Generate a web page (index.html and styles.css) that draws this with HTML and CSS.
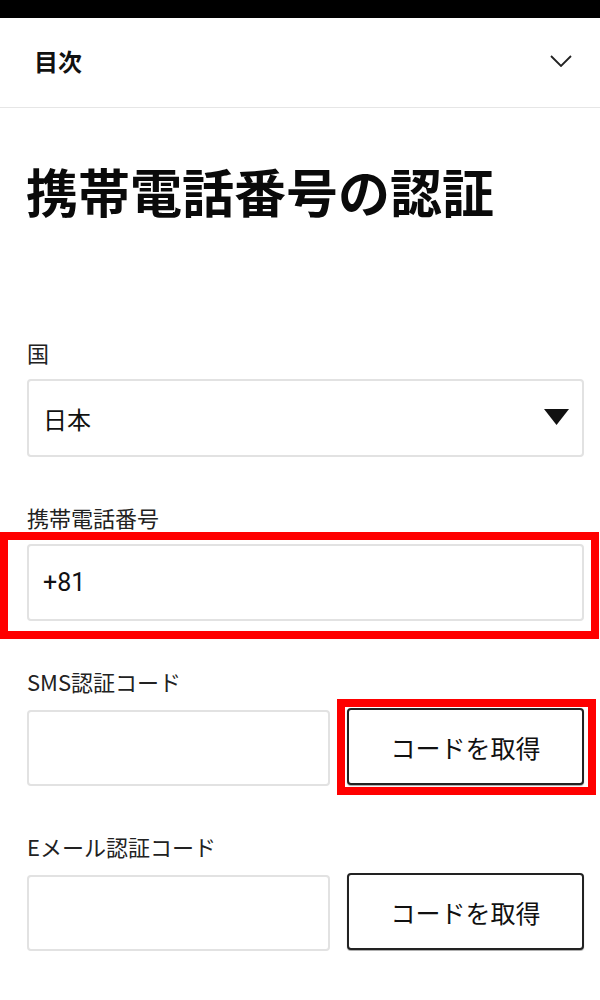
FILE: index.html
```html
<!DOCTYPE html>
<html lang="ja">
<head>
<meta charset="utf-8">
<title>携帯電話番号の認証</title>
<link rel="stylesheet" href="styles.css">
</head>
<body>
<div class="statusbar"></div>
<header class="toc">
  <span class="toc-title">目次</span>
  <svg class="chevron" width="22" height="12" viewBox="0 0 22 12"><polyline points="1,1 11,11 21,1" fill="none" stroke="#222" stroke-width="1.8"/></svg>
</header>
<main class="page">
  <h1 class="title">携帯電話番号の認証</h1>
  <form class="form">
    <div class="field first">
      <div class="label">国</div>
      <div class="select">
        <span class="select-value">日本</span>
        <svg class="caret" width="25" height="16" viewBox="0 0 25 16"><polygon points="0,0 25,0 12.5,16" fill="#111"/></svg>
      </div>
    </div>
    <div class="field">
      <div class="label">携帯電話番号</div>
      <div class="control-wrap">
        <div class="input">+81</div>
        <div class="annot annot-phone"></div>
      </div>
    </div>
    <div class="field">
      <div class="label">SMS認証コード</div>
      <div class="row">
        <div class="input code"></div>
        <div class="btn-wrap">
          <button type="button" class="btn">コードを取得</button>
          <div class="annot annot-btn"></div>
        </div>
      </div>
    </div>
    <div class="field">
      <div class="label">Eメール認証コード</div>
      <div class="row">
        <div class="input code"></div>
        <div class="btn-wrap">
          <button type="button" class="btn">コードを取得</button>
        </div>
      </div>
    </div>
  </form>
</main>
</body>
</html>
```
FILE: styles.css
```css
* { box-sizing: border-box; }
html, body { margin: 0; padding: 0; background: #fff; }
body {
  width: 600px;
  font-family: "Noto Sans CJK JP", "Noto Sans", sans-serif;
  color: #1a1a1a;
}
.statusbar { height: 18px; background: #000; }
.toc {
  height: 90px;
  border-bottom: 1px solid #e6e6e6;
  display: flex;
  align-items: center;
  justify-content: space-between;
  padding: 0 28px 4px 34px;
}
.toc-title { font-size: 24px; font-weight: 700; line-height: 1; color: #111; }
.chevron { display: block; }
.page { padding: 0 16px 0 27px; }
.title {
  margin: 57px 0 0 -1px;
  font-size: 52px;
  line-height: 52px;
  font-weight: 700;
  color: #0a0a0a;
  letter-spacing: 0;
}
.form { display: flex; flex-direction: column; }
.field { margin-top: 49px; }
.field.first { margin-top: 124px; }
.label {
  font-size: 22px;
  line-height: 22px;
  color: #222;
  margin-bottom: 16px;
}
.select {
  height: 78px;
  border: 2px solid #e2e2e2;
  border-radius: 4px;
  display: flex;
  align-items: center;
  justify-content: space-between;
  padding: 0 13px 0 14px;
}
.select-value { font-size: 24px; color: #111; }
.caret { display: block; margin-top: -2px; }
.control-wrap { position: relative; }
.input {
  height: 77px;
  border: 2px solid #e2e2e2;
  border-radius: 4px;
  display: flex;
  align-items: center;
  padding: 0 14px;
  font-family: Roboto, "Noto Sans CJK JP", sans-serif;
  font-size: 25px;
  color: #111;
  background: #fff;
}
.row { display: flex; gap: 17px; align-items: flex-start; }
.input.code { width: 303px; height: 76px; margin-top: 2px; }
.btn-wrap { position: relative; flex: 1; }
.btn {
  width: 100%;
  height: 77px;
  border: 2px solid #222;
  border-radius: 4px;
  background: #fff;
  box-shadow: 0 1px 1px rgba(0,0,0,0.35);
  font-family: "Noto Sans CJK JP", sans-serif;
  font-size: 25px;
  color: #111;
  padding: 0;
}
.annot {
  position: absolute;
  border: 8px solid #ff0000;
  pointer-events: none;
}
.annot-phone { top: -12px; left: -27px; right: -15px; bottom: -18px; }
.annot-btn { top: -9px; left: -10px; right: -12px; bottom: -10px; }
```
